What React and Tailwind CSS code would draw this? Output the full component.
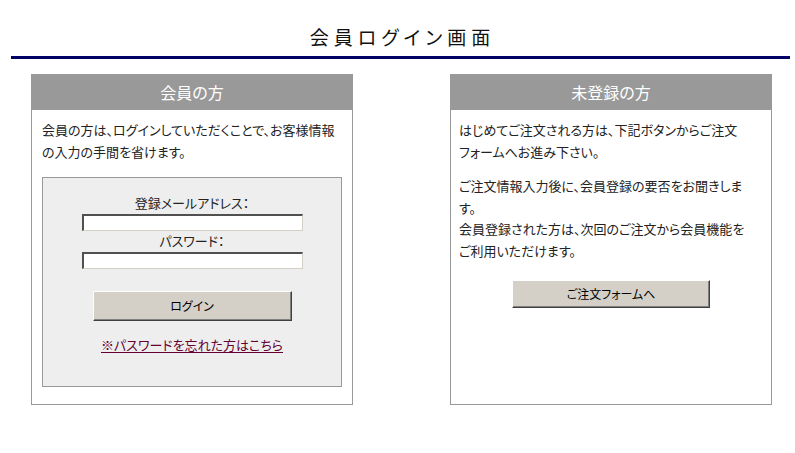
export default function App() {
  const font = "font-['Noto_Sans_CJK_JP','Noto_Sans',sans-serif] [font-feature-settings:'palt']";
  return (
    <div className={`w-[795px] h-[453px] bg-white text-[#222] ${font}`}>
      <div className="h-[56px] pt-[24px] pl-[10px] text-center text-[19px] leading-[26px] tracking-[5px] text-[#111]">
        会員ログイン画面
      </div>
      <div className="ml-[11px] w-[779px] h-[3px] bg-[#000066]" />
      <div className="mt-[15px] flex pl-[31px] gap-[97px]">
        {/* Left box */}
        <div className="w-[322px] h-[331px] border border-[#999] flex flex-col">
          <div className="h-[36px] -mx-px -mt-px bg-[#999] text-white text-[16px] flex items-center justify-center">
            会員の方
          </div>
          <div className="px-[10px] pt-[9px] text-[13px] leading-[22px] whitespace-nowrap">
            会員の方は、ログインしていただくことで、お客様情報
            <br />
            の入力の手間を省けます。
          </div>
          <div className="mx-[10px] mt-[14px] h-[210px] border border-[#999] bg-[#eeeeee] flex flex-col items-center text-[13px]">
            <div className="mt-[16px] leading-[18px]">登録メールアドレス：</div>
            <div className="mt-[2px] w-[221px] h-[17px] bg-white border-t-2 border-l-2 border-t-[#505050] border-l-[#505050] border-b border-r border-b-[#d4d0c8] border-r-[#d4d0c8]" />
            <div className="mt-[1px] leading-[18px]">パスワード：</div>
            <div className="mt-[2px] w-[221px] h-[17px] bg-white border-t-2 border-l-2 border-t-[#505050] border-l-[#505050] border-b border-r border-b-[#d4d0c8] border-r-[#d4d0c8]" />
            <button className="mt-[22px] w-[199px] h-[30px] bg-[#d4d0c8] border border-t-white border-l-white border-b-[#404040] border-r-[#404040] shadow-[inset_-1px_-1px_0_#808080] text-[12px] text-black">
              ログイン
            </button>
            <a href="#" className="mt-[15px] leading-[18px] text-[#660033] underline underline-offset-2">
              ※パスワードを忘れた方はこちら
            </a>
          </div>
        </div>
        {/* Right box */}
        <div className="w-[322px] h-[331px] border border-[#999] flex flex-col">
          <div className="h-[36px] -mx-px -mt-px bg-[#999] text-white text-[16px] flex items-center justify-center">
            未登録の方
          </div>
          <div className="px-[8px] pt-[9px] text-[13px] leading-[21.5px] whitespace-nowrap">
            <p>
              はじめてご注文される方は、下記ボタンからご注文
              <br />
              フォームへお進み下さい。
            </p>
            <p className="mt-[13px]">
              ご注文情報入力後に、会員登録の要否をお聞きしま
              <br />
              す。
              <br />
              会員登録された方は、次回のご注文から会員機能を
              <br />
              ご利用いただけます。
            </p>
          </div>
          <div className="mt-[19px] flex justify-center">
            <button className="w-[198px] h-[28px] bg-[#d4d0c8] border border-t-white border-l-white border-b-[#404040] border-r-[#404040] shadow-[inset_-1px_-1px_0_#808080] text-[12px] text-black">
              ご注文フォームへ
            </button>
          </div>
        </div>
      </div>
    </div>
  );
}
